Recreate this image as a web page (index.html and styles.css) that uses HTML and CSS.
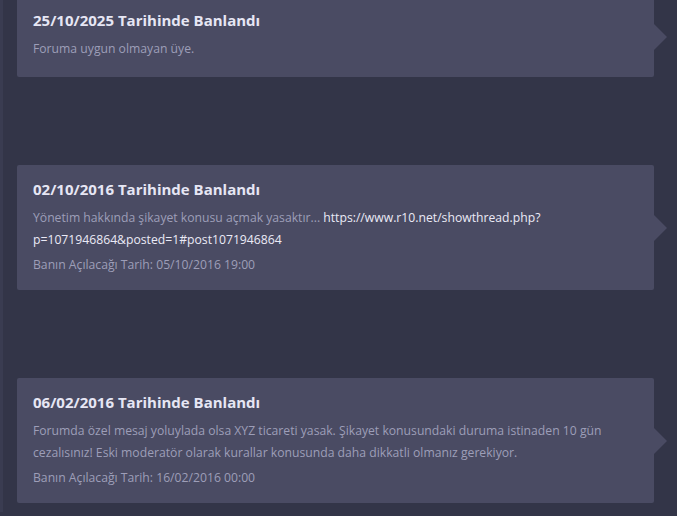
FILE: index.html
```html
<!DOCTYPE html>
<html lang="tr">
<head>
    <meta charset="UTF-8">
    <meta name="viewport" content="width=device-width, initial-scale=1.0">
    <title>Ban Geçmişi</title>
    <link rel="stylesheet" href="styles.css">
</head>
<body>

<div class="page">
    <div class="ban-list">
        <div class="ban-item">
            <h3>25/10/2025 Tarihinde Banlandı</h3>
            <p class="reason">Foruma uygun olmayan üye.</p>
        </div>

        <div class="ban-item">
            <h3>02/10/2016 Tarihinde Banlandı</h3>
            <p class="reason">Yönetim hakkında şikayet konusu açmak yasaktır... <a href="#">https://www.r10.net/showthread.php?p=1071946864&amp;posted=1#post1071946864</a></p>
            <p class="until">Banın Açılacağı Tarih: 05/10/2016 19:00</p>
        </div>

        <div class="ban-item">
            <h3>06/02/2016 Tarihinde Banlandı</h3>
            <p class="reason">Forumda özel mesaj yoluylada olsa XYZ ticareti yasak. Şikayet konusundaki duruma istinaden 10 gün cezalısınız! Eski moderatör olarak kurallar konusunda daha dikkatli olmanız gerekiyor.</p>
            <p class="until">Banın Açılacağı Tarih: 16/02/2016 00:00</p>
        </div>
    </div>
</div>

</body>
</html>
```
FILE: styles.css
```css
body {
    margin: 0;
    font-family: "Open Sans", Arial, sans-serif;
    background-color: #333548;
    height: 516px;
    overflow: hidden;
}

.page {
    border-left: 3px solid #3a3c51;
    padding-left: 14px;
    min-height: 100%;
}

.ban-list {
    display: flex;
    flex-direction: column;
    gap: 88px;
    margin-top: -4px;
    width: 637px;
}

.ban-item {
    position: relative;
    background-color: #4a4b63;
    border-radius: 2px;
    padding: 14px 16px 14px;
}

/* small arrow on the right edge */
.ban-item::after {
    content: "";
    position: absolute;
    left: 100%;
    top: 50%;
    margin-top: -13px;
    border-top: 13px solid transparent;
    border-bottom: 13px solid transparent;
    border-left: 13px solid #4a4b63;
}

.ban-item h3 {
    margin: 0 0 8px;
    font-size: 15px;
    line-height: 20px;
    font-weight: bold;
    color: #e6e6f4;
}

.ban-item p {
    margin: 0;
    font-size: 12.2px;
    line-height: 22px;
    color: #9d9eb8;
}

.ban-item .reason {
    margin-bottom: 3px;
}

.ban-item a {
    color: #eaeaf6;
    text-decoration: none;
}
```
